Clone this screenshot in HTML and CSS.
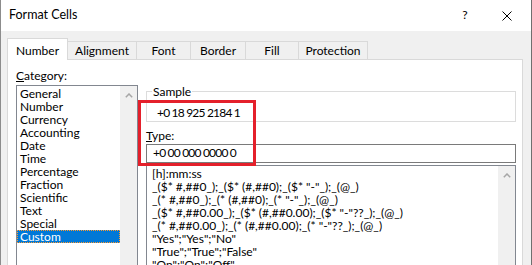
FILE: index.html
```html
<!DOCTYPE html>
<html>
<head>
<meta charset="utf-8">
<link rel="stylesheet" href="styles.css">
</head>
<body>
<div class="window">
  <div class="titlebar">
    <span class="title">Format Cells</span>
    <span class="tbtn help">?</span>
    <span class="tbtn close"><svg width="10" height="10" viewBox="0 0 10 10"><path d="M0.5 0.5L9.5 9.5M9.5 0.5L0.5 9.5" stroke="#000" stroke-width="1" fill="none"/></svg></span>
  </div>
  <div class="client">
    <div class="tabs">
      <div class="tab selected w-number">Number</div>
      <div class="tab w-align">Alignment</div>
      <div class="tab w-font">Font</div>
      <div class="tab w-border">Border</div>
      <div class="tab w-fill">Fill</div>
      <div class="tab w-prot">Protection</div>
    </div>
    <div class="panel">
      <div class="catcol">
        <div class="label"><u>C</u>ategory:</div>
        <div class="listbox cat">
          <ul class="items">
            <li>General</li>
            <li>Number</li>
            <li>Currency</li>
            <li>Accounting</li>
            <li>Date</li>
            <li>Time</li>
            <li>Percentage</li>
            <li>Fraction</li>
            <li>Scientific</li>
            <li>Text</li>
            <li>Special</li>
            <li class="sel">Custom</li>
          </ul>
          <div class="scroll"><svg width="8" height="5" viewBox="0 0 8 5"><path d="M0.8 4.2L4 1L7.2 4.2" stroke="#a6a6a6" stroke-width="1.5" fill="none"/></svg></div>
        </div>
      </div>
      <div class="rightcol">
        <fieldset class="sample">
          <legend>Sample</legend>
          <div class="sampleval">+0 18 925 2184 1</div>
        </fieldset>
        <div class="label typelabel"><u>T</u>ype:</div>
        <div class="input">+0 00 000 0000 0</div>
        <div class="listbox fmt">
          <ul class="items">
            <li>[h]:mm:ss</li>
            <li>_($* #,##0_);_($* (#,##0);_($* "-"_);_(@_)</li>
            <li>_(* #,##0_);_(* (#,##0);_(* "-"_);_(@_)</li>
            <li>_($* #,##0.00_);_($* (#,##0.00);_($* "-"??_);_(@_)</li>
            <li>_(* #,##0.00_);_(* (#,##0.00);_(* "-"??_);_(@_)</li>
            <li>"Yes";"Yes";"No"</li>
            <li>"True";"True";"False"</li>
            <li>"On";"On";"Off"</li>
          </ul>
          <div class="scroll"><svg width="8" height="5" viewBox="0 0 8 5"><path d="M0.8 4.2L4 1L7.2 4.2" stroke="#a6a6a6" stroke-width="1.5" fill="none"/></svg></div>
        </div>
      </div>
    </div>
  </div>
  <div class="annotation"></div>
</div>
</body>
</html>
```
FILE: styles.css
```css
* { box-sizing: border-box; }
body { margin: 0; background: #fff; }

.window {
  width: 532px;
  height: 265px;
  overflow: hidden;
  position: relative;
  font: 12px/13px Lato, "Liberation Sans", sans-serif;
  color: #000;
  background: #f0f0f0;
  border-left: 1px solid #8c8c8c;
  border-right: 1px solid #6f6f6f;
}

.titlebar {
  height: 31px;
  background: #fff;
  display: flex;
  align-items: flex-start;
  padding-right: 3px;
}
.title { flex: 1; padding: 8px 0 0 8px; font-size: 12.5px; }
.tbtn {
  width: 42px;
  height: 31px;
  display: flex;
  justify-content: center;
  padding-top: 8px;
}
.close { padding-top: 11px; }

.client { padding: 7px 8px 0 6px; }

.tabs { display: flex; align-items: flex-end; height: 21px; }
.tab {
  height: 18px;
  border: 1px solid #d9d9d9;
  border-left: none;
  border-bottom: none;
  text-align: center;
  padding-top: 2px;
  background: #f0f0f0;
  white-space: nowrap;
}
.tab.selected {
  height: 22px;
  margin-bottom: -1px;
  background: #fff;
  border-left: 1px solid #d9d9d9;
  padding-top: 5px;
  position: relative;
  z-index: 1;
}
.w-number { width: 61px; }
.w-align { width: 69px; }
.w-font { width: 54px; }
.w-border { width: 55px; }
.w-fill { width: 53px; }
.w-prot { width: 69px; }

.panel {
  background: #fff;
  border: 1px solid #d9d9d9;
  display: flex;
  gap: 8px;
  padding: 9px 6px 0 8px;
  height: 300px;
}

.catcol { width: 122px; flex: none; }
.label { height: 13px; white-space: nowrap; }
.label u { text-decoration-thickness: 1px; }

.listbox {
  border: 1px solid #828790;
  display: flex;
  background: #fff;
  height: 220px;
}
.cat { margin-top: 3px; }
.items { flex: 1; list-style: none; margin: 0; padding: 1px 0 0 0; overflow: hidden; }
.items li { height: 13px; padding-left: 3px; white-space: nowrap; }
.items li.sel {
  background: #0078d7;
  color: #fff;
  border: 1px dotted #ff9a2e;
  padding-left: 2px;
  line-height: 11px;
}
.scroll {
  width: 17px;
  flex: none;
  background: #f0f0f0;
  display: flex;
  justify-content: center;
  align-items: flex-start;
  padding-top: 7px;
}

.rightcol { flex: 1; min-width: 0; padding-top: 16px; }

.sample {
  margin: 0;
  min-width: 0;
  border: 1px solid #dcdcdc;
  padding: 8px 5px 2px 5px;
}
.sample legend { padding: 0 1px; line-height: 13px; }
.sampleval { padding-left: 5px; letter-spacing: -0.8px; white-space: pre; }

.typelabel { margin-top: 7px; }
.input {
  margin-top: 2px;
  height: 19px;
  border: 1px solid #7a7a7a;
  padding: 1px 6px;
  background: #fff;
  white-space: pre;
  letter-spacing: -0.8px;
}
.fmt { margin-top: 2px; }
.fmt .items li { padding-left: 5px; }

.annotation {
  position: absolute;
  left: 137px;
  top: 100px;
  width: 118px;
  height: 66px;
  border: 3px solid #e4202b;
}
```
